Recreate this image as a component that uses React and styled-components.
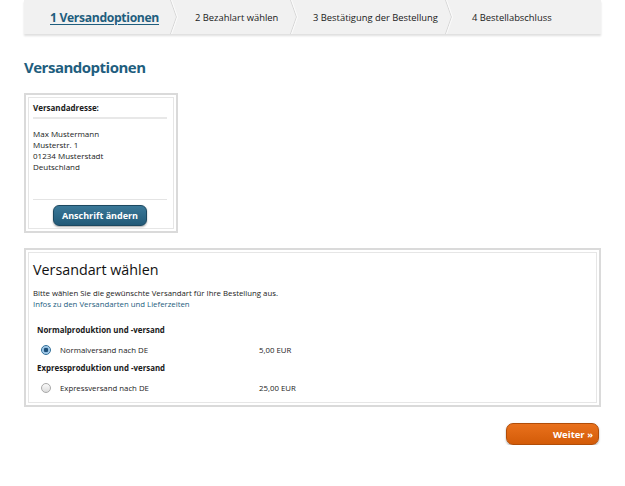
import React from 'react'
import styled, { createGlobalStyle } from 'styled-components'

const GlobalStyle = createGlobalStyle`
  html, body { margin: 0; padding: 0; background: #fff; }
  body { font-family: "Open Sans", "DejaVu Sans", sans-serif; color: #1a1a1a; }
`

const steps = [
  { label: '1 Versandoptionen', width: 148, pad: 26, active: true },
  { label: '2 Bezahlart wählen', width: 120, pad: 23 },
  { label: '3 Bestätigung der Bestellung', width: 155, pad: 21 },
  { label: '4 Bestellabschluss', width: 154, pad: 25 },
]

const Chevron = () => (
  <ChevronSvg width="8" height="34" viewBox="0 0 8 34">
    <polyline points="0.5,0 6.5,17 0.5,34" fill="none" stroke="#d6d6d6" strokeWidth="1" />
    <polyline points="1.5,0 7.5,17 1.5,34" fill="none" stroke="#fbfbfb" strokeWidth="1" />
  </ChevronSvg>
)

const App = () => {
  return (
    <Page>
      <GlobalStyle />
      <Stepper>
        {steps.map((s, i) => (
          <Step key={s.label} $width={s.width} $pad={s.pad}>
            <StepLabel $active={s.active}>{s.label}</StepLabel>
            {i < steps.length - 1 && <Chevron />}
          </Step>
        ))}
      </Stepper>

      <Title>Versandoptionen</Title>

      <AddressBox>
        <Inner>
          <BoxHead>Versandadresse:</BoxHead>
          <Address>
            <div>Max Mustermann</div>
            <div>Musterstr. 1</div>
            <div>01234 Musterstadt</div>
            <div>Deutschland</div>
          </Address>
          <ButtonRow>
            <BlueButton>Anschrift ändern</BlueButton>
          </ButtonRow>
        </Inner>
      </AddressBox>

      <ShippingBox>
        <ShippingInner>
          <SectionTitle>Versandart wählen</SectionTitle>
          <Intro>Bitte wählen Sie die gewünschte Versandart für Ihre Bestellung aus.</Intro>
          <InfoLink href="#">Infos zu den Versandarten und Lieferzeiten</InfoLink>

          <GroupTitle>Normalproduktion und -versand</GroupTitle>
          <OptionRow>
            <Radio $checked />
            <OptionName>Normalversand nach DE</OptionName>
            <Price>5,00 EUR</Price>
          </OptionRow>

          <GroupTitle $tight>Expressproduktion und -versand</GroupTitle>
          <OptionRow>
            <Radio />
            <OptionName>Expressversand nach DE</OptionName>
            <Price>25,00 EUR</Price>
          </OptionRow>
        </ShippingInner>
      </ShippingBox>

      <Footer>
        <NextButton>Weiter »</NextButton>
      </Footer>
    </Page>
  )
}

export default App

const Page = styled.div`
width: 577px;
margin-left: 24px;
`
const Stepper = styled.div`
display: flex;
height: 34px;
background: #f1f1f1;
box-shadow: 0 2px 2px rgba(0, 0, 0, 0.13);
`
const Step = styled.div`
position: relative;
display: flex;
align-items: center;
width: ${p => p.$width}px;
padding-left: ${p => p.$pad}px;
box-sizing: border-box;
`
const ChevronSvg = styled.svg`
position: absolute;
right: -6px;
top: 0;
`
const StepLabel = styled.span`
font-size: ${p => (p.$active ? '12.2px' : '9.4px')};
font-weight: ${p => (p.$active ? 700 : 400)};
color: ${p => (p.$active ? '#1f5e7e' : '#1a1a1a')};
text-decoration: ${p => (p.$active ? 'underline' : 'none')};
text-underline-offset: 2px;
letter-spacing: ${p => (p.$active ? '-0.35px' : '0')};
white-space: nowrap;
`
const Title = styled.h1`
margin: 23px 0 16px;
font-size: 15px;
line-height: 20px;
font-weight: 700;
letter-spacing: -0.5px;
color: #1f5e7e;
`
const AddressBox = styled.div`
width: 154px;
height: 140px;
box-sizing: border-box;
border: 2px solid #dadada;
padding: 2px;
`
const Inner = styled.div`
height: 100%;
box-sizing: border-box;
border: 1px solid #e6e6e6;
padding: 4px 6px 0 4px;
display: flex;
flex-direction: column;
`
const BoxHead = styled.div`
font-size: 8px;
font-weight: 700;
line-height: 12px;
padding-bottom: 3px;
border-bottom: 2px solid #e8e8e8;
`
const Address = styled.div`
font-size: 8px;
line-height: 11px;
padding-top: 9px;
height: 81px;
box-sizing: border-box;
border-bottom: 1px solid #e4e4e4;
`
const ButtonRow = styled.div`
display: flex;
justify-content: center;
padding-top: 5px;
`
const BlueButton = styled.button`
width: 94px;
height: 21px;
border: 1px solid #1c4860;
border-radius: 6px;
background: linear-gradient(#3a7898, #225a78);
box-shadow: 0 1px 2px rgba(0, 0, 0, 0.35);
color: #fff;
font-family: "Open Sans", sans-serif;
font-size: 9px;
font-weight: 700;
padding: 0;
`
const ShippingBox = styled.div`
margin-top: 15px;
height: 159px;
box-sizing: border-box;
border: 2px solid #dadada;
padding: 2px;
`
const ShippingInner = styled.div`
height: 100%;
box-sizing: border-box;
border: 1px solid #e6e6e6;
padding: 7px 4px 0;
`
const SectionTitle = styled.h2`
margin: 0 0 8px;
font-size: 14.3px;
line-height: 20px;
font-weight: 400;
color: #111;
`
const Intro = styled.div`
font-size: 7.8px;
line-height: 11px;
`
const InfoLink = styled.a`
display: block;
font-size: 7.8px;
line-height: 11px;
color: #245d7e;
text-decoration: none;
`
const GroupTitle = styled.div`
margin: ${p => (p.$tight ? '1px' : '14px')} 0 0 4px;
font-size: 7.9px;
font-weight: 700;
line-height: 12px;
`
const OptionRow = styled.div`
display: flex;
align-items: center;
height: 22px;
margin-top: 3px;
padding-left: 8px;
font-size: 7.8px;
`
const Radio = styled.span`
width: 8px;
height: 8px;
border-radius: 50%;
border: 1px solid ${p => (p.$checked ? '#2f6f9a' : '#a9a9a9')};
background: ${p =>
  p.$checked
    ? 'radial-gradient(circle, #1d4f78 0 2px, #8dbbe0 2.5px, #cfe3f3 5px)'
    : 'linear-gradient(#fafafa, #dcdcdc)'};
flex: none;
`
const OptionName = styled.span`
margin-left: 9px;
width: 199px;
`
const Price = styled.span``

const Footer = styled.div`
display: flex;
justify-content: flex-end;
padding: 16px 2px 0 0;
`
const NextButton = styled.button`
width: 93px;
height: 22px;
border: 1px solid #b14d08;
border-radius: 7px;
background: linear-gradient(#e9711c, #d35b08);
box-shadow: 0 1px 2px rgba(0, 0, 0, 0.35);
color: #fff;
font-family: "Open Sans", sans-serif;
font-size: 9.5px;
font-weight: 700;
text-align: right;
padding: 0 5px 0 0;
`
